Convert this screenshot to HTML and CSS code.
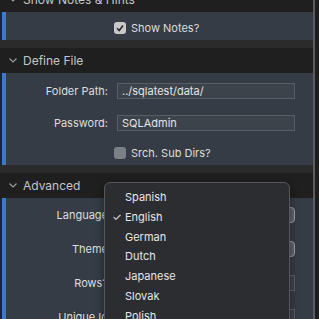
FILE: index.html
```html
<!doctype html>
<html>
<head>
<meta charset="utf-8">
<title>Preferences</title>
<link rel="stylesheet" href="styles.css">
</head>
<body>
<div class="prefs">
	<div class="sect">
		<div class="head"><svg class="chev" width="8" height="5" viewBox="0 0 8 5"><polyline points="0.5,0.5 4,4 7.5,0.5"/></svg>Show Notes &amp; Hints</div>
		<div class="panel notes">
			<div class="form">
				<span></span>
				<label class="check"><span class="box on"><svg width="10" height="10" viewBox="0 0 10 10"><polyline points="2,5.2 4.2,7.5 8,2.5"/></svg></span>Show Notes?</label>
			</div>
		</div>
	</div>
	<div class="sect">
		<div class="head"><svg class="chev" width="8" height="5" viewBox="0 0 8 5"><polyline points="0.5,0.5 4,4 7.5,0.5"/></svg>Define File</div>
		<div class="panel file">
			<div class="form">
				<span class="lbl">Folder Path:</span>
				<div class="field">../sqlatest/data/</div>
				<span class="lbl">Password:</span>
				<div class="field">SQLAdmin</div>
				<span></span>
				<label class="check"><span class="box"></span>Srch. Sub Dirs?</label>
			</div>
		</div>
	</div>
	<div class="sect last">
		<div class="head"><svg class="chev" width="8" height="5" viewBox="0 0 8 5"><polyline points="0.5,0.5 4,4 7.5,0.5"/></svg>Advanced</div>
		<div class="panel adv">
			<div class="form rows">
				<span class="lbl">Language</span>
				<div class="popbtn"></div>
				<span class="lbl">Theme</span>
				<div class="popbtn"></div>
				<span class="lbl">Rows?</span>
				<div class="field"></div>
				<span class="lbl">Unique Id</span>
				<div class="field"></div>
			</div>
			<ul class="menu">
				<li>Spanish</li>
				<li class="sel">English</li>
				<li>German</li>
				<li>Dutch</li>
				<li>Japanese</li>
				<li>Slovak</li>
				<li>Polish</li>
			</ul>
		</div>
	</div>
</div>
</body>
</html>
```

FILE: styles.css
```css
*{margin:0;padding:0;box-sizing:border-box;}
html,body{width:319px;height:319px;overflow:hidden;background:#2b2b2b;font-family:'Inter','Liberation Sans',sans-serif;}
.prefs{display:flex;flex-direction:column;gap:8px;width:319px;margin-top:-13px;border-right:4px solid #1e1e1e;box-shadow:inset -2px 0 0 #5c5c5c;}
.sect{display:flex;flex-direction:column;margin-right:2px;}
.head{display:flex;align-items:center;height:25px;padding-left:9px;background:#1f1f1f;color:#c6c6c6;font-size:12px;}
.chev{margin-right:6px;fill:none;stroke:#9a9a9a;stroke-width:1.2;}
.panel{position:relative;background:#353c45;box-shadow:inset 2px 0 0 #21252b,inset 6px 0 0 #3a7bd2;color:#dedede;font-size:11px;}
.form{display:grid;grid-template-columns:108px 178px;column-gap:9px;align-items:center;}
.notes{height:28px;padding-top:9px;}
.file{height:92px;padding-top:10px;}
.file .form{grid-template-rows:16px 16px 12px;row-gap:16px;}
.adv{height:140px;}
.rows{grid-auto-rows:34px;}
.lbl{text-align:right;white-space:nowrap;}
.field{height:16px;padding-left:4px;line-height:15px;background:#3c434b;border:1px solid #575e66;color:#e4e4e4;}
.check{display:flex;align-items:center;margin-left:-3px;}
.box{display:flex;align-items:center;justify-content:center;width:12px;height:12px;margin-right:5px;border-radius:3px;background:#7c8087;}
.box.on{background:#c9c9c9;}
.box svg{fill:none;stroke:#2a2a2a;stroke-width:1.6;}
.popbtn{height:16px;border-radius:4px;background:#5d6269;border:1px solid #9da1a6;}
.menu{position:absolute;top:-16px;left:104px;width:186px;height:150px;list-style:none;padding-top:5px;background:#2c2d30;border:1px solid #56575b;border-radius:6px;box-shadow:0 3px 10px rgba(0,0,0,0.4);}
.menu li{height:19.8px;line-height:19.8px;padding-left:20px;color:#e6e6e6;font-size:11px;}
.menu li.sel{position:relative;}
.menu li.sel::before{content:"\2713";position:absolute;left:7px;font-size:11px;}
```
